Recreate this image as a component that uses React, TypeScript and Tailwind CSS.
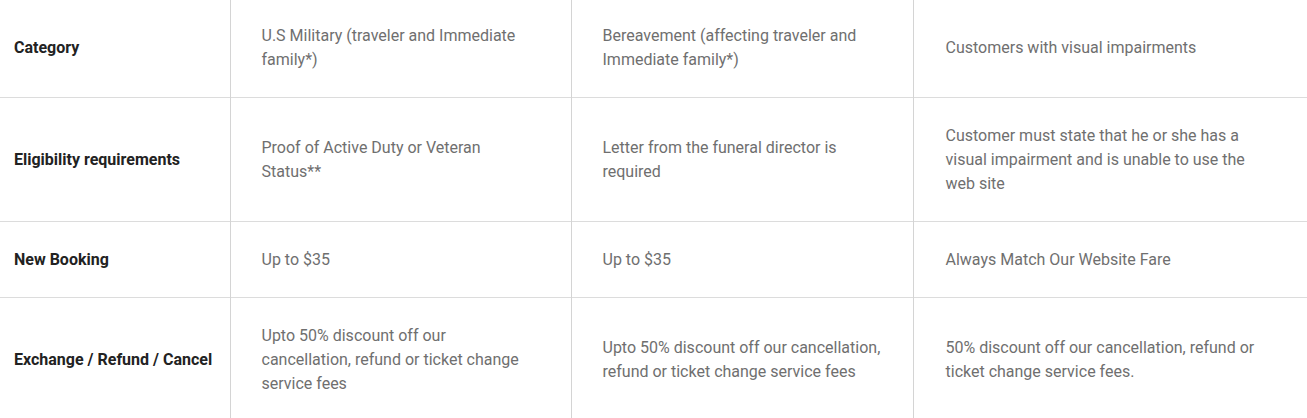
import React from "react";

const rows: [string, string, string, string][] = [
  ["Category", "U.S Military (traveler and Immediate family*)", "Bereavement (affecting traveler and Immediate family*)", "Customers with visual impairments"],
  ["Eligibility requirements", "Proof of Active Duty or Veteran Status**", "Letter from the funeral director is required", "Customer must state that he or she has a visual impairment and is unable to use the web site"],
  ["New Booking", "Up to $35", "Up to $35", "Always Match Our Website Fare"],
  ["Exchange / Refund / Cancel", "Upto 50% discount off our cancellation, refund or ticket change service fees", "Upto 50% discount off our cancellation, refund or ticket change service fees", "50% discount off our cancellation, refund or ticket change service fees."],
];

export default function App() {
  return (
    <div className="w-[1307px] h-[418px] overflow-hidden bg-white" style={{ fontFamily: "Roboto, 'Liberation Sans', sans-serif" }}>
      <table className="-mt-[2px] w-[1307px] border-collapse table-fixed text-[16px] leading-[24px]">
        <colgroup>
          <col className="w-[230px]" />
          <col className="w-[341px]" />
          <col className="w-[342px]" />
          <col />
        </colgroup>
        <tbody>
          {rows.map((r, i) => (
            <tr key={i} className={i < rows.length - 1 ? "border-b border-[#dcdcdc]" : ""}>
              <td className="pl-[14px] pr-2 pt-[26px] pb-[25px] align-middle font-bold text-[#222222] border-r border-[#d4d4d4]">
                {r[0]}
              </td>
              <td className="pl-[31px] pr-2 pt-[26px] pb-[25px] align-middle text-[#6f6f6f] border-r border-[#d4d4d4]">
                <div className="w-[266px]">{r[1]}</div>
              </td>
              <td className="pl-[31px] pr-2 pt-[26px] pb-[25px] align-middle text-[#6f6f6f] border-r border-[#d4d4d4]">
                <div className="w-[286px]">{r[2]}</div>
              </td>
              <td className="pl-[32px] pr-2 pt-[26px] pb-[25px] align-middle text-[#6f6f6f]">
                <div className="w-[322px]">{r[3]}</div>
              </td>
            </tr>
          ))}
        </tbody>
      </table>
    </div>
  );
}
